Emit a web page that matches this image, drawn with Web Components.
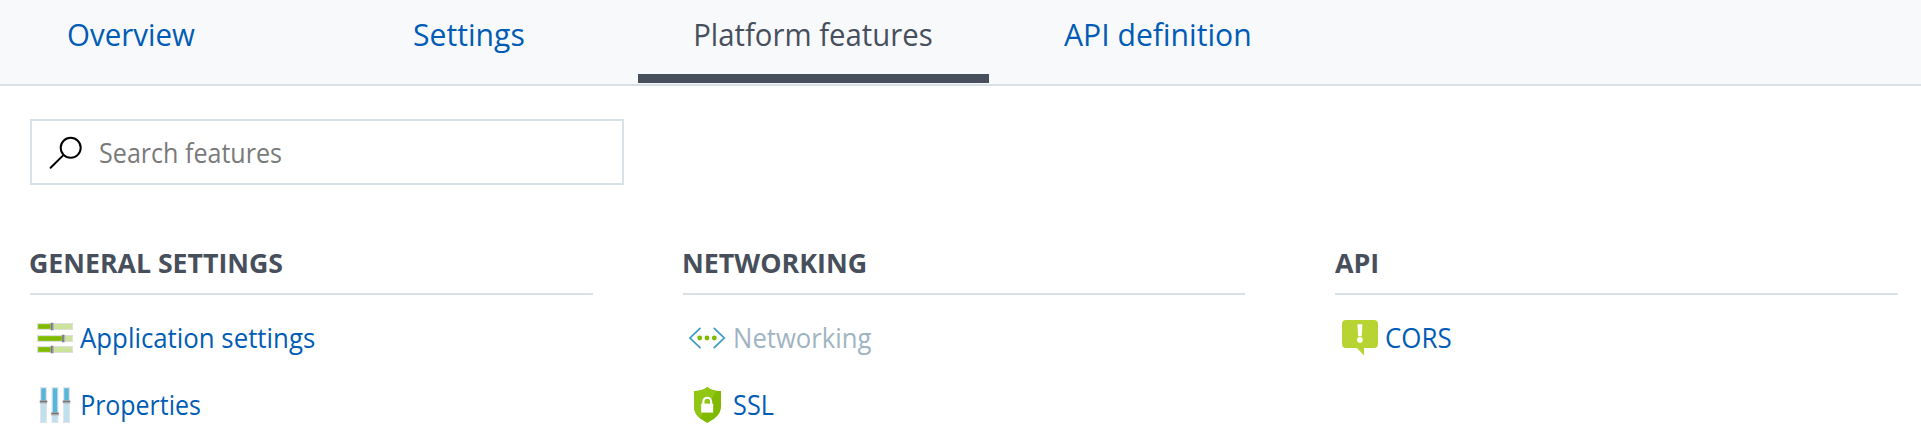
<!DOCTYPE html>
<html lang="en"><head><meta charset="utf-8"><title>Platform features</title>
<style>
body{margin:0;background:#fff;font-family:"Open Sans","Noto Sans",sans-serif;color:#474f5c;overflow:hidden}
</style></head><body>
<feature-page></feature-page>
<script>
// One-line label whose glyphs are fitted to the given width.
class FitLabel extends HTMLElement{
  connectedCallback(){
    const r=this.attachShadow({mode:'open'});
    r.innerHTML=`<style>:host{display:block;flex:none;white-space:nowrap}span{display:inline-block;transform-origin:0 0;vertical-align:top}</style><span><slot></slot></span>`;
    const w=+this.getAttribute('width'),cs=getComputedStyle(this);
    const c=document.createElement('canvas').getContext('2d');
    c.font=`${cs.fontWeight} ${cs.fontSize} ${cs.fontFamily}`;
    const m=c.measureText(this.textContent.trim());
    const s=w/(m.actualBoundingBoxRight+m.actualBoundingBoxLeft);
    this.style.width=w+'px';
    r.querySelector('span').style.transform=`translateX(${m.actualBoundingBoxLeft*s}px) scaleX(${s})`;
  }
}
customElements.define('fit-label',FitLabel);

const ICONS={
search:`<g fill="none" stroke="#000" stroke-width="2"><circle cx="24.7" cy="13.8" r="10"/><path d="M17.4 21.1 4.6 33.7" stroke-linecap="round"/></g>`,
sliders:[[5,16],[17,27.3],[28,16]].map(([y,x])=>`<rect x="2.5" y="${y+.5}" width="35" height="6" fill="#cbe39a" stroke="#dedede"/><rect x="3.2" y="${y+1.2}" width="${x-3.2}" height="4.6" fill="#7fba00"/><rect x="${x-.6}" y="${y-.2}" width="3.6" height="7.4" fill="#b5b5b5"/><rect x="${x-.1}" y="${y-.2}" width="1.6" height="7.4" fill="#777"/>`).join(''),
properties:[[5,16],[16.5,28],[28,16]].map(([x,y])=>`<rect x="${x+.5}" y="2.5" width="6" height="35" fill="#bde1ef" stroke="#e1e3e5"/><rect x="${x+1.3}" y="3.3" width="4.4" height="${y-3.3}" fill="#59b4d9"/><rect x="${x-.2}" y="${y-.7}" width="7.4" height="3.2" fill="#b5b5b5"/><rect x="${x-.2}" y="${y-.2}" width="7.4" height="1.4" fill="#747474"/>`).join(''),
network:`<path d="M12 10.4 2 20l10 9.6M26.2 10.4 36.2 20l-10 9.6" fill="none" stroke="#3999c6" stroke-width="1.7" stroke-linecap="round"/><g fill="#7fba00"><circle cx="11.7" cy="20" r="2.4"/><circle cx="19" cy="20" r="2.4"/><circle cx="26.3" cy="20" r="2.4"/></g>`,
shield:`<path d="M19.3 2C16 5 11 6.2 6 6v15.5C6 30 12.8 34.3 19.3 38 25.8 34.3 33 30 33 21.5V6C28 6.2 22.6 5 19.3 2Z" fill="#7fba00"/><path d="M19.3 2C16 5 11 6.2 6 6v15.5c0 5 2.4 8.7 6 11.5L28.5 6C25 5.5 21.7 4.2 19.3 2Z" fill="#91c614"/><path d="M15.4 19v-2.4a3.85 3.85 0 0 1 7.7 0V19" fill="none" stroke="#fff" stroke-width="2.2"/><rect x="13.2" y="18.6" width="12" height="9" fill="#fff"/>`,
alert:`<path d="M6 2h28a4 4 0 0 1 4 4v20a4 4 0 0 1-4 4H24v7.5L17 30H6a4 4 0 0 1-4-4V6a4 4 0 0 1 4-4Z" fill="#b8d432"/><path d="M17.4 6.3h5l-.7 12h-3.6Z" fill="#fff"/><circle cx="19.9" cy="21.9" r="2.8" fill="#fff"/>`
};
class UiIcon extends HTMLElement{
  connectedCallback(){
    this.attachShadow({mode:'open'}).innerHTML=`<style>:host{display:block;width:40px;height:40px;flex:none}svg{display:block}</style><svg width="40" height="40" viewBox="0 0 40 40" aria-hidden="true">${ICONS[this.getAttribute('name')]}</svg>`;
  }
}
customElements.define('ui-icon',UiIcon);

class TabItem extends HTMLElement{
  connectedCallback(){
    this.attachShadow({mode:'open'}).innerHTML=`<style>:host{display:flex;flex-direction:column;justify-content:space-between;box-sizing:border-box;height:83px;color:#015cb5;font-size:31.5px;line-height:68px}
    :host([active]){color:#474f5c}i{display:block;height:9px;flex:none}:host([active]) i{background:#474f5c}div{height:68px;padding-left:var(--lead)}</style><div><slot></slot></div><i></i>`;
  }
}
customElements.define('tab-item',TabItem);

class TabBar extends HTMLElement{
  connectedCallback(){
    this.attachShadow({mode:'open'}).innerHTML=`<style>:host{display:grid;grid-template-columns:346px 292px 351px 351px;height:84px;background:#f8f9fb;border-bottom:2px solid #d8e1e6}</style><slot></slot>`;
  }
}
customElements.define('tab-bar',TabBar);

class SearchBox extends HTMLElement{
  connectedCallback(){
    this.attachShadow({mode:'open'}).innerHTML=`<style>:host{display:flex;box-sizing:border-box;width:594px;height:66px;border:2px solid #d8e1e6;padding:13px 0 0 14px;gap:14px;color:#7a7a7a;font-size:26.7px;line-height:38px}</style><ui-icon name="search"></ui-icon><slot></slot>`;
  }
}
customElements.define('search-box',SearchBox);

class FeatureGroup extends HTMLElement{
  connectedCallback(){
    this.attachShadow({mode:'open'}).innerHTML=`<style>:host{display:block}header{font-size:26.7px;font-weight:700;line-height:40px;height:50px;padding-left:var(--lead,0px);border-bottom:2px solid #d8e1e6}section{padding:23px 0 0 5px;display:grid;gap:27px}</style><header><slot name="title"></slot></header><section><slot></slot></section>`;
  }
}
customElements.define('feature-group',FeatureGroup);

class FeatureItem extends HTMLElement{
  connectedCallback(){
    this.attachShadow({mode:'open'}).innerHTML=`<style>:host{display:flex;height:40px;color:#015cb5;font-size:26.7px;line-height:40px}:host([disabled]){color:#9fb4c2}div{padding-left:var(--lead)}</style><ui-icon name="${this.getAttribute('icon')}"></ui-icon><div><slot></slot></div>`;
  }
}
customElements.define('feature-item',FeatureItem);

class FeaturePage extends HTMLElement{
  connectedCallback(){
    this.attachShadow({mode:'open'}).innerHTML=`<style>:host{display:block}search-box{margin:33px 0 0 30px}main{display:grid;grid-template-columns:563px 562px 563px;column-gap:90px;margin:58px 0 0 30px}</style>
<tab-bar>
<tab-item style="--lead:68.2px"><fit-label width="127.4">Overview</fit-label></tab-item>
<tab-item style="--lead:68.2px"><fit-label width="109.8">Settings</fit-label></tab-item>
<tab-item active style="--lead:57.8px"><fit-label width="235.7">Platform features</fit-label></tab-item>
<tab-item style="--lead:74.8px"><fit-label width="185.5">API definition</fit-label></tab-item>
</tab-bar>
<search-box><fit-label width="181.3">Search features</fit-label></search-box>
<main>
<feature-group style="--lead:0px"><fit-label slot="title" width="252.3">GENERAL SETTINGS</fit-label>
<feature-item icon="sliders" style="--lead:5.4px"><fit-label width="234.5">Application settings</fit-label></feature-item>
<feature-item icon="properties" style="--lead:7.4px"><fit-label width="118.2">Properties</fit-label></feature-item></feature-group>
<feature-group style="--lead:1.2px"><fit-label slot="title" width="181.8">NETWORKING</fit-label>
<feature-item icon="network" disabled style="--lead:6.7px"><fit-label width="136">Networking</fit-label></feature-item>
<feature-item icon="shield" style="--lead:5.7px"><fit-label width="40">SSL</fit-label></feature-item></feature-group>
<feature-group style="--lead:.2px"><fit-label slot="title" width="42.4">API</fit-label>
<feature-item icon="alert" style="--lead:6.3px"><fit-label width="65">CORS</fit-label></feature-item></feature-group>
</main>`;
  }
}
customElements.define('feature-page',FeaturePage);
</script></body></html>
